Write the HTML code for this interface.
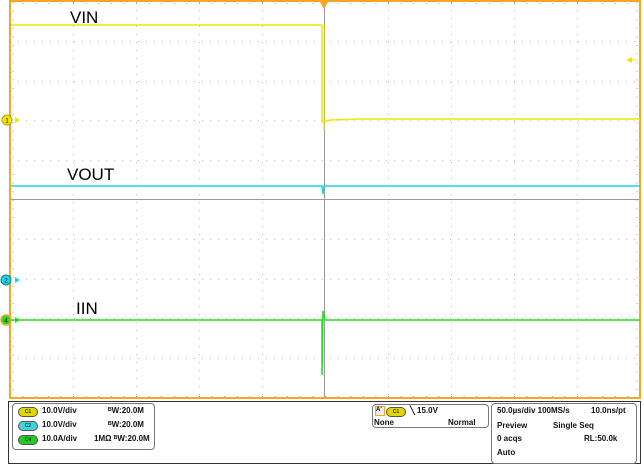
<!DOCTYPE html>
<html><head><meta charset="utf-8"><style>
body{margin:0;width:644px;height:464px;background:#fff;overflow:hidden;position:relative;font-family:"Liberation Sans",sans-serif}
.t{position:absolute;font-size:8px;font-weight:bold;color:#111;white-space:nowrap}
.pill{position:absolute;width:18px;height:8px;border-radius:5px;border:1px solid #555;font-size:5px;text-align:center;line-height:8px;color:#333;font-weight:bold}
.box{position:absolute;border:1px solid #777;border-radius:4px}
</style></head><body>
<svg width="644" height="400" style="position:absolute;left:0;top:0">
<g stroke="#bbb" stroke-width="1" stroke-dasharray="1,7">
<line x1="73.5" y1="2" x2="73.5" y2="398"/><line x1="136.5" y1="2" x2="136.5" y2="398"/><line x1="199.5" y1="2" x2="199.5" y2="398"/><line x1="262.5" y1="2" x2="262.5" y2="398"/><line x1="388.5" y1="2" x2="388.5" y2="398"/><line x1="451.5" y1="2" x2="451.5" y2="398"/><line x1="514.5" y1="2" x2="514.5" y2="398"/><line x1="577.5" y1="2" x2="577.5" y2="398"/>
<line x1="10" y1="41.5" x2="640" y2="41.5"/><line x1="10" y1="81.5" x2="640" y2="81.5"/><line x1="10" y1="120.5" x2="640" y2="120.5"/><line x1="10" y1="160.5" x2="640" y2="160.5"/><line x1="10" y1="239.5" x2="640" y2="239.5"/><line x1="10" y1="279.5" x2="640" y2="279.5"/><line x1="10" y1="318.5" x2="640" y2="318.5"/><line x1="10" y1="358.5" x2="640" y2="358.5"/>
</g>
<line x1="324.5" y1="2" x2="324.5" y2="398" stroke="#999"/>
<line x1="10" y1="199.5" x2="640" y2="199.5" stroke="#999"/>
<g stroke="#999" stroke-dasharray="1,7.6">
<line x1="10" y1="3.5" x2="640" y2="3.5" stroke-dasharray="1,11.6"/>
<line x1="10" y1="396.5" x2="640" y2="396.5" stroke-dasharray="1,11.6"/>
<line x1="13" y1="2" x2="13" y2="398"/><line x1="637" y1="2" x2="637" y2="398"/>
</g>
<rect x="10" y="1" width="630" height="397" fill="none" stroke="#f5a623" stroke-width="2"/>
<polyline points="11,25 322,25 322,122 324,122 330,120 360,119 640,119" fill="none" stroke="#f2e600" stroke-width="1.5"/>
<line x1="324" y1="25" x2="324" y2="130" stroke="#f2e600" stroke-width="1"/>
<polyline points="11,186 322,186 323,194 324,186 640,186" fill="none" stroke="#22d4e8" stroke-width="1.5"/>
<polyline points="11,320 322,320 322,375 323,311 325,320 640,320" fill="none" stroke="#22dd22" stroke-width="1.5"/>
<polygon points="320,2 328,2 324,9" fill="#f5a623"/>
<polygon points="626,60 632,57 632,63" fill="#f2e600"/><line x1="630" y1="60" x2="638" y2="60" stroke="#f2e600"/>
<polygon points="20,120 15,117 15,123" fill="#f2e600"/>
<circle cx="7" cy="120" r="5" fill="#f2e600" stroke="#aa0"/><text x="7" y="122.5" font-size="6" text-anchor="middle" font-family="Liberation Sans">1</text>
<polygon points="20,280 15,277 15,283" fill="#22d4e8"/>
<circle cx="6" cy="280" r="5" fill="#22d4e8" stroke="#088"/><text x="6" y="282.5" font-size="6" text-anchor="middle" font-family="Liberation Sans">2</text>
<polygon points="20,320 15,317 15,323" fill="#22dd22"/>
<circle cx="6" cy="320" r="5" fill="#22dd22" stroke="#f5a623" stroke-width="1.5"/><text x="6" y="322.5" font-size="6" text-anchor="middle" font-family="Liberation Sans">4</text>
<text x="70" y="23" font-size="17" font-family="Liberation Sans">VIN</text>
<text x="67" y="180" font-size="17" font-family="Liberation Sans">VOUT</text>
<text x="76" y="314" font-size="17" font-family="Liberation Sans">IIN</text>
</svg>
<div style="position:absolute;left:8px;top:401px;width:631px;height:61px;border:1px solid #333"></div>
<div class="box" style="left:12px;top:403px;width:141px;height:45px"></div>
<div class="pill" style="left:18px;top:407px;background:#e0d800">C1</div><div class="t" style="left:42px;top:406px">10.0V/div</div><div class="t" style="left:108px;top:406px">ᴮW:20.0M</div>
<div class="pill" style="left:18px;top:421px;background:#3cd4e0">C2</div><div class="t" style="left:42px;top:420px">10.0V/div</div><div class="t" style="left:108px;top:420px">ᴮW:20.0M</div>
<div class="pill" style="left:18px;top:435px;background:#22cc22">C4</div><div class="t" style="left:42px;top:434px">10.0A/div</div><div class="t" style="left:94px;top:434px">1MΩ ᴮW:20.0M</div>
<div class="box" style="left:372px;top:404px;width:115px;height:22px"></div>
<div style="position:absolute;left:375px;top:406px;width:8px;height:8px;border:1px solid #f5a623;background:#eee;font-size:6px;font-weight:bold">A'</div>
<div class="pill" style="left:386px;top:407px;background:#e0d800">C1</div>
<div class="t" style="left:410px;top:406px">╲ 15.0V</div>
<div class="t" style="left:374px;top:418px">None</div><div class="t" style="left:448px;top:418px">Normal</div>
<div class="box" style="left:491px;top:403px;width:144px;height:59px"></div>
<div class="t" style="left:497px;top:406px">50.0µs/div 100MS/s</div><div class="t" style="left:591px;top:406px">10.0ns/pt</div>
<div class="t" style="left:497px;top:421px">Preview</div><div class="t" style="left:553px;top:421px">Single Seq</div>
<div class="t" style="left:497px;top:434px">0 acqs</div><div class="t" style="left:584px;top:434px">RL:50.0k</div>
<div class="t" style="left:497px;top:448px">Auto</div>
</body></html>
